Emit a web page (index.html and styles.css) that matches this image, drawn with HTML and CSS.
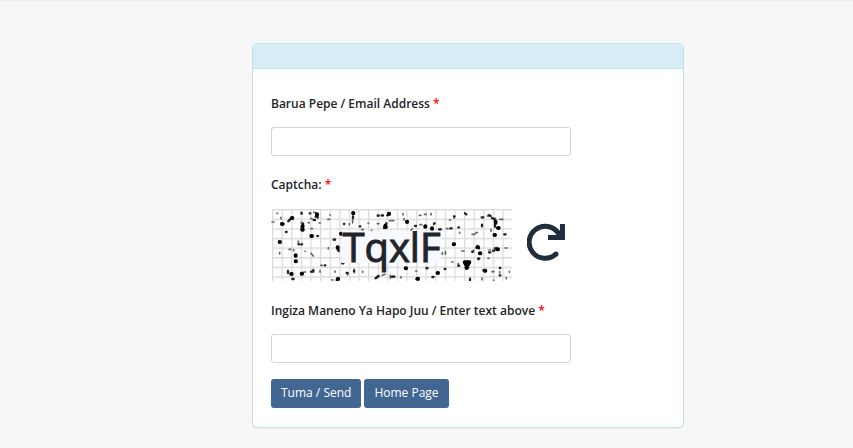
FILE: index.html
```
<!DOCTYPE html>
<html lang="sw">
<head>
    <meta charset="UTF-8">
    <meta name="viewport" content="width=device-width, initial-scale=1.0">
    <title>Barua Pepe</title>
    <link rel="stylesheet" href="styles.css">
</head>
<body>
    <main class="page">
        <div class="card">
            <div class="card-header"></div>
            <form class="card-body" onsubmit="return false">
                <div class="form-group">
                    <label for="email">Barua Pepe / Email Address <span class="required">*</span></label>
                    <input type="email" class="form-control" id="email">
                </div>
                <div class="form-group">
                    <p class="label">Captcha: <span class="required">*</span></p>
                    <div class="captcha-row">
                        <div class="captcha">
                            <svg class="captcha-noise" viewBox="18 27 723 216" preserveAspectRatio="none" aria-hidden="true">
                                <defs>
                                    <pattern id="grid" x="21" y="27" width="28.8" height="28.8" patternUnits="userSpaceOnUse">
                                        <path d="M0 2H28.8M2 0V28.8" stroke="#dcdcdc" stroke-width="4"/>
                                    </pattern>
                                </defs>
                                <rect x="21" y="27" width="720" height="216" fill="url(#grid)"/>
                                <g fill="none" stroke="#000" stroke-linecap="round">
                                    <!-- faint specks -->
                                    <path stroke="#666" stroke-width="5" d="M21 66h6M36 40h2M48 52v4M44 158v4M72 148h6M71 60h5M86 149v3M120 154h1M109 36v4M109 66v4M130 68h3M138 86h4M137 56h4M162 69h4M146 37h4M188 58h6M194 45h2M158 108h3M190 143v4M100 123v8M108 133h4M138 160l7 8M167 196h5M117 216h5M165 212v5M210 213v4M200 240h4M248 221v4M268 208v10M293 214v3M206 118h5M217 152l6 2M253 71v3M263 55v14M290 89h5M320 90v4M309 70h2M338 46h4M350 47h4M374 62h12M337 71h5M248 155h3M232 190h5M330 236l8-8M352 226l8-3M376 226v9"/>
                                    <path stroke="#666" stroke-width="5" d="M414 41v4M417 56v4M438 91l4-5M463 46h5M465 74h5M478 43h6M498 40v5M506 71v4M523 88h6M545 86h4M553 60h4M567 50v5M584 97v3M532 158v5M541 155v8M590 153h7M560 186h4M580 190v8M621 103h8M632 100l5-3M668 48l6-4M678 88v6M672 150h4M704 58h10M718 103h5M720 144h6M669 175h3M641 175v4M681 215h6M704 215v4M632 143h8M626 150v6M695 142v8M500 231h4M483 203h6M459 240h3M615 234v6M651 234v5M686 240v3M733 214v3M724 233v3M452 213h4M408 230v4M690 54l4 8"/>
                                    <!-- medium dots -->
                                    <path stroke="#222" stroke-width="7" d="M50 70l6 2M70 64l6-7M63 96h2M110 81v8M110 39v2M134 40h2M154 41l4 12M146 60h4M109 90h5M152 50h6M101 133h1M109 133h2M114 70v3M157 108h1M179 196h2M206 119h4M218 144l3 8M215 240l5-4M69 213v6M77 222h2M145 210v5M112 219v3M82 237h4M138 215h4M237 72h1M263 37v4M264 49v5M284 79h2M338 47h3M350 46h4M357 84l7-14M367 46l6-6M361 76v8M380 230h4M357 207h3M333 234l8-6M267 212v2M245 219h3M232 190h2"/>
                                    <path stroke="#222" stroke-width="7" d="M370 40h4M425 65h4M450 78h3M479 79h4M507 70h2M522 88h5M503 85v2M556 85h4M580 82h2M600 40l4 3M567 49h2M566 132h3M650 52h5M651 74v5M671 46l6 2M681 54l7 4M690 62l2 10M696 84h6M690 72v8M686 105l4 2M718 103h3M637 138l5 7M684 152h4M672 157h4M690 145l8 5M642 160h6M622 154v2M580 197h2M602 202h8M655 211l5 3M516 219h3M503 231h3M485 205h2M421 205h4M384 230h4M454 237h5M539 207h2M704 204h2M704 226h2M639 176h4M615 237v4"/>
                                    <!-- heavy blots -->
                                    <path stroke-width="12" d="M44 126h1M51 72h1M81 54h1M113 78v1M113 88v1M92 166v1M92 184h1M139 108h2M156 43v1M228 101h1M218 142v1M79 222h1M110 221h1M219 236v1M265 39v1M372 41v1M361 78l1 3M426 65v1M481 79v1M501 85v1M566 133h1M692 66v1M700 84h1M689 105h1M638 142h1M645 160h1M698 148h1M599 187h14M602 193h8M605 203v1M660 212h1M518 219h1M458 236h1M422 205h1"/>
                                </g>
                            </svg>
                            <span class="captcha-text">TqxlF</span>
                        </div>
                        <button type="button" class="refresh" aria-label="Refresh captcha">
                            <svg viewBox="0 0 38 38" aria-hidden="true">
                                <path d="M29 31A16 16 0 1 1 31.500 10.500" fill="none" stroke="#1f2d3d" stroke-width="5" stroke-linejoin="round"/>
                                <circle cx="29" cy="31" r="2.500" fill="#1f2d3d"/>
                                <path d="M33 1h5v16H21v-5h9l-2-3 3-3 2 2z" fill="#1f2d3d"/>
                            </svg>
                        </button>
                    </div>
                </div>
                <div class="form-group">
                    <label for="captcha">Ingiza Maneno Ya Hapo Juu / Enter text above <span class="required">*</span></label>
                    <input type="text" class="form-control" id="captcha">
                </div>
                <div class="actions">
                    <button type="submit" class="btn">Tuma / Send</button>
                    <a href="#" class="btn">Home Page</a>
                </div>
            </form>
        </div>
    </main>
</body>
</html>
```
FILE: styles.css
```
* {
    box-sizing: border-box;
}
body {
    margin: 0;
    background-color: #f7f7f7;
    border-top: 1px solid #ececec;
    font-family: "Open Sans", sans-serif;
    font-size: 12px;
    line-height: 18px;
    color: #212529;
}
.page {
    display: grid;
    grid-template-columns: 252fr 432fr 169fr;
    padding: 42px 0 20px;
}
.card {
    grid-column: 2;
    background-color: #fff;
    border: 1px solid #bee5eb;
    border-radius: 5px;
    box-shadow: 0 1px 1px rgba(0, 0, 0, 0.05);
}
.card-header {
    height: 25px;
    background-color: #d9edf7;
    border-bottom: 1px solid #bee5eb;
    border-radius: 4px 4px 0 0;
}
.card-body {
    padding: 26px 18px 19px;
}
.form-group {
    margin-bottom: 20px;
}
.form-group:nth-child(3) {
    margin-bottom: 16px;
}
label,
.label {
    display: block;
    margin: 0 0 14px;
    font-weight: 600;
}
.label {
    margin-bottom: 15px;
}
.required {
    color: red;
}
.form-control {
    display: block;
    width: 300px;
    max-width: 100%;
    height: 29px;
    padding: 4px 8px;
    border: 1px solid #ced4da;
    border-radius: 3px;
    background-color: #fff;
    font: inherit;
}
.captcha-row {
    display: flex;
    align-items: flex-start;
    gap: 15px;
    height: 73px;
}
.captcha {
    position: relative;
    display: flex;
    align-items: center;
    justify-content: center;
    width: 241px;
    height: 72px;
    padding-top: 4px;
}
.captcha-noise {
    position: absolute;
    top: 0;
    left: 0;
    width: 100%;
    height: 100%;
}
.captcha-text {
    position: relative;
    background-color: #f8f8ff;
    font-size: 40px;
    line-height: 32px;
    -webkit-text-stroke: 1px #212529;
}
.refresh {
    padding: 14px 0 0;
    border: 0;
    background: none;
    cursor: pointer;
}
.refresh svg {
    display: block;
    width: 38px;
    height: 38px;
}
.actions {
    display: flex;
    gap: 3px;
}
.btn {
    padding: 5px 10px 6px;
    border: 0;
    border-radius: 3px;
    background-color: #416691;
    color: #fff;
    font: inherit;
    font-weight: 500;
    text-decoration: none;
    cursor: pointer;
}
```
